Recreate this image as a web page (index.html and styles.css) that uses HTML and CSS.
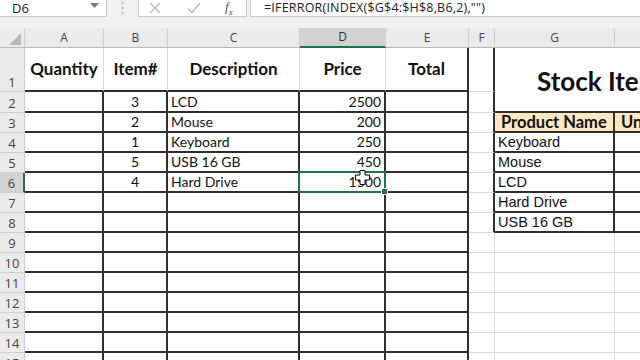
FILE: index.html
```html
<!DOCTYPE html>
<html lang="en">
<head>
    <meta charset="UTF-8">
    <meta name="viewport" content="width=device-width, initial-scale=1.0">
    <title>Stock Items</title>
    <link rel="stylesheet" href="styles.css">
</head>
<body>
    <!-- Formula bar -->
    <div class="formula-bar">
        <div class="name-box">
            <span>D6</span>
            <svg class="caret" width="9" height="5" viewBox="0 0 9 5"><path d="M0 0h9L4.5 5z" fill="#777"/></svg>
        </div>
        <svg class="grip" width="3" height="14" viewBox="0 0 3 14">
            <circle cx="1.5" cy="2" r="1" fill="#aaa"/>
            <circle cx="1.5" cy="7" r="1" fill="#aaa"/>
            <circle cx="1.5" cy="12" r="1" fill="#aaa"/>
        </svg>
        <div class="fx-buttons">
            <svg width="12" height="12" viewBox="0 0 12 12"><path d="M1 1l10 10M11 1L1 11" stroke="#b5b5b5" stroke-width="1.2" fill="none"/></svg>
            <svg width="14" height="12" viewBox="0 0 14 12"><path d="M1 6.5l4 4L13 1" stroke="#b5b5b5" stroke-width="1.2" fill="none"/></svg>
            <span class="fx">f<sub>x</sub></span>
        </div>
        <div class="formula">=IFERROR(INDEX($G$4:$H$8,B6,2),"")</div>
    </div>

    <!-- Sheet -->
    <div class="sheet">
        <table class="grid">
            <colgroup>
                <col class="w-head"><col class="w-a"><col class="w-b"><col class="w-c"><col class="w-d">
                <col class="w-e"><col class="w-f"><col class="w-g"><col class="w-h">
            </colgroup>
            <tr class="col-heads">
                <th class="corner"><svg width="12" height="12" viewBox="0 0 12 12"><path d="M12 0v12H0z" fill="#b9b9b9"/></svg></th>
                <th>A</th><th>B</th><th>C</th><th class="active-col">D</th><th>E</th><th>F</th><th>G</th><th></th>
            </tr>
            <tr class="r-1">
                <th>1</th>
                <td class="hd b">Quantity</td>
                <td class="hd b">Item#</td>
                <td class="hd b">Description</td>
                <td class="hd b">Price</td>
                <td class="hd b r">Total</td>
                <td class="r"></td>
                <td class="title b" colspan="2" rowspan="2">Stock Items</td>
            </tr>
            <tr class="r-2">
                <th>2</th>
                <td class="b r"></td><td class="mid b r">3</td><td class="b r">LCD</td><td class="num b r">2500</td><td class="b r"></td>
                <td class="r"></td>
            </tr>
            <tr>
                <th>3</th>
                <td class="b r"></td><td class="mid b r">2</td><td class="b r">Mouse</td><td class="num b r">200</td><td class="b r"></td>
                <td class="r"></td>
                <td class="pn b r">Product Name</td><td class="pn b">Unit Price</td>
            </tr>
            <tr>
                <th>4</th>
                <td class="b r"></td><td class="mid b r">1</td><td class="b r">Keyboard</td><td class="num b r">250</td><td class="b r"></td>
                <td class="r"></td>
                <td class="stock b r">Keyboard</td><td class="b"></td>
            </tr>
            <tr>
                <th>5</th>
                <td class="b r"></td><td class="mid b r">5</td><td class="b r">USB 16 GB</td><td class="num b r">450</td><td class="b r"></td>
                <td class="r"></td>
                <td class="stock b r">Mouse</td><td class="b"></td>
            </tr>
            <tr>
                <th class="active-row">6</th>
                <td class="b r"></td><td class="mid b r">4</td><td class="b r">Hard Drive</td>
                <td class="num b r selected">1500
                    <span class="selection"><span class="handle"></span></span>
                    <svg class="cursor" width="15" height="15" viewBox="0 0 15 15">
                        <path d="M5 .5h5v4.5h4.5v5H10v4.5H5V10H.5V5H5z" fill="#fff" stroke="#000" stroke-width="1"/>
                    </svg>
                </td>
                <td class="b r"></td>
                <td class="r"></td>
                <td class="stock b r">LCD</td><td class="b"></td>
            </tr>
            <tr>
                <th>7</th>
                <td class="b r"></td><td class="b r"></td><td class="b r"></td><td class="b r"></td><td class="b r"></td>
                <td class="r"></td>
                <td class="stock b r">Hard Drive</td><td class="b"></td>
            </tr>
            <tr>
                <th>8</th>
                <td class="b r"></td><td class="b r"></td><td class="b r"></td><td class="b r"></td><td class="b r"></td>
                <td class="r"></td>
                <td class="stock b r">USB 16 GB</td><td class="b"></td>
            </tr>
            <tr>
                <th>9</th>
                <td class="b r"></td><td class="b r"></td><td class="b r"></td><td class="b r"></td><td class="b r"></td>
                <td></td><td></td><td></td>
            </tr>
            <tr>
                <th>10</th>
                <td class="b r"></td><td class="b r"></td><td class="b r"></td><td class="b r"></td><td class="b r"></td>
                <td></td><td></td><td></td>
            </tr>
            <tr>
                <th>11</th>
                <td class="b r"></td><td class="b r"></td><td class="b r"></td><td class="b r"></td><td class="b r"></td>
                <td></td><td></td><td></td>
            </tr>
            <tr>
                <th>12</th>
                <td class="b r"></td><td class="b r"></td><td class="b r"></td><td class="b r"></td><td class="b r"></td>
                <td></td><td></td><td></td>
            </tr>
            <tr>
                <th>13</th>
                <td class="b r"></td><td class="b r"></td><td class="b r"></td><td class="b r"></td><td class="b r"></td>
                <td></td><td></td><td></td>
            </tr>
            <tr>
                <th>14</th>
                <td class="b r"></td><td class="b r"></td><td class="b r"></td><td class="b r"></td><td class="b r"></td>
                <td></td><td></td><td></td>
            </tr>
            <tr>
                <th>15</th>
                <td class="b r"></td><td class="b r"></td><td class="b r"></td><td class="b r"></td><td class="b r"></td>
                <td></td><td></td><td></td>
            </tr>
        </table>
    </div>
</body>
</html>
```

FILE: styles.css
```css
body {
    margin: 0;
    width: 640px;
    height: 360px;
    overflow: hidden;
    background: #fff;
    font-family: "Open Sans", sans-serif;
}

/* formula bar */
.formula-bar {
    display: flex;
    align-items: flex-start;
    height: 28px;
    background: #f1f1f1;
}
.name-box {
    display: flex;
    align-items: center;
    justify-content: space-between;
    box-sizing: border-box;
    width: 107px;
    height: 17px;
    padding: 0 7px 0 12px;
    background: #fff;
    border-right: 1px solid #c9c9c9;
    border-bottom: 1px solid #c9c9c9;
    font-size: 13px;
    color: #222;
}
.caret {
    margin-bottom: 6px;
}
.grip {
    margin: 1px 14px 0 14px;
}
.fx-buttons {
    display: flex;
    align-items: center;
    gap: 26px;
    box-sizing: border-box;
    width: 109px;
    height: 17px;
    padding-left: 10px;
    background: #fff;
    border: 1px solid #c9c9c9;
    border-top: 0;
}
.fx {
    font-family: "Liberation Serif", serif;
    font-style: italic;
    font-size: 13px;
    color: #555;
    margin-left: -2px;
}
.fx sub {
    font-size: 9px;
}
.formula {
    flex: 1;
    box-sizing: border-box;
    height: 17px;
    margin-left: 3px;
    padding-left: 13px;
    background: #fff;
    border-left: 1px solid #c9c9c9;
    border-bottom: 1px solid #c9c9c9;
    font-size: 12.5px;
    letter-spacing: 0.2px;
    line-height: 15px;
    color: #222;
    white-space: nowrap;
}

/* grid */
.sheet {
    overflow: hidden;
}
.grid {
    table-layout: fixed;
    width: 715px;
    border-collapse: separate;
    border-spacing: 0;
}
.w-head { width: 25px; }
.w-a { width: 79px; }
.w-b { width: 64px; }
.w-c { width: 132px; }
.w-d { width: 86px; }
.w-e { width: 83px; }
.w-f { width: 26px; }
.w-g { width: 120px; }
.w-h { width: 100px; }

.grid tr {
    height: 20px;
}
.grid tr.r-1 {
    height: 44px;
}
.grid tr.r-2 {
    height: 21px;
}
.grid th {
    padding: 0;
    background: #ebebeb;
    border-right: 1px solid #d0d0d0;
    border-bottom: 1px solid #d0d0d0;
    font-weight: normal;
    font-size: 13px;
    color: #444;
    text-align: center;
    vertical-align: bottom;
    line-height: 18px;
}
.col-heads th {
    border-bottom: 1px solid #b9b9b9;
    font-size: 12px;
    vertical-align: middle;
}
.col-heads th.corner {
    text-align: right;
    padding-right: 3px;
    vertical-align: bottom;
    line-height: 0;
    padding-bottom: 2px;
}
.grid th.active-col {
    background: #d3d3d3;
    border-bottom: 2px solid #217346;
    color: #333;
}
.grid th.active-row {
    background: #d3d3d3;
    border-right: 2px solid #217346;
}

.grid td {
    padding: 0 3px;
    border-right: 1px solid #dadada;
    border-bottom: 1px solid #dadada;
    font-family: "Lato", sans-serif;
    font-size: 14px;
    color: #111;
    white-space: nowrap;
    overflow: hidden;
    vertical-align: bottom;
    line-height: 18px;
}
.grid td.b {
    border-bottom: 2px solid #2e2e2e;
}
.grid td.r {
    border-right: 2px solid #2e2e2e;
}
.grid td.hd {
    font-weight: bold;
    font-size: 17px;
    text-align: center;
    vertical-align: middle;
}
.grid td.mid {
    text-align: center;
}
.grid td.num {
    text-align: right;
}
.grid td.title {
    font-weight: bold;
    font-size: 26px;
    text-align: center;
    vertical-align: middle;
    padding-top: 2px;
    overflow: visible;
}
.grid td.pn {
    background: #fde8c0;
    font-weight: bold;
    font-size: 16.5px;
    padding-left: 6px;
}
.grid td.stock {
    font-family: "Liberation Sans", sans-serif;
    font-size: 14.5px;
}

/* selected cell */
.grid td.selected {
    position: relative;
    overflow: visible;
}
.selection {
    position: absolute;
    left: -2px;
    top: -2px;
    right: -2px;
    bottom: -2px;
    border: 2px solid #217346;
}
.handle {
    position: absolute;
    right: -4px;
    bottom: -4px;
    width: 5px;
    height: 5px;
    background: #217346;
    border: 1px solid #fff;
}
.cursor {
    position: absolute;
    left: 55px;
    top: -3px;
}
```
